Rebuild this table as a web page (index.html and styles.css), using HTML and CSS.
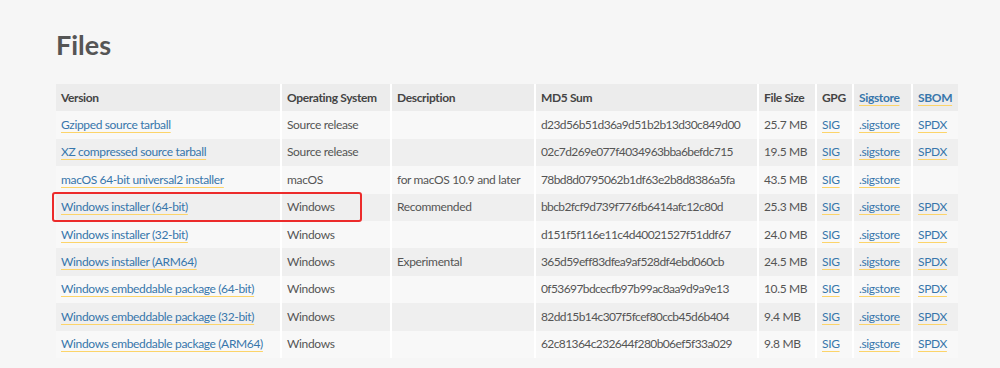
FILE: index.html
```html
<!DOCTYPE html>
<html lang="en">
<head>
  <meta charset="UTF-8" />
  <title>Files</title>
  <link rel="stylesheet" href="styles.css">
</head>
<body>
  <section class="files">
    <h1>Files</h1>
    <div class="table-wrap">
      <table class="file-table">
        <colgroup>
          <col class="c-version">
          <col class="c-os">
          <col class="c-desc">
          <col class="c-md5">
          <col class="c-size">
          <col class="c-gpg">
          <col class="c-sig">
          <col class="c-sbom">
        </colgroup>
        <thead>
          <tr>
            <th>Version</th>
            <th>Operating System</th>
            <th>Description</th>
            <th>MD5 Sum</th>
            <th>File Size</th>
            <th>GPG</th>
            <th><a href="#">Sigstore</a></th>
            <th><a href="#">SBOM</a></th>
          </tr>
        </thead>
        <tbody>
          <tr>
            <td><a href="#">Gzipped source tarball</a></td>
            <td>Source release</td>
            <td></td>
            <td>d23d56b51d36a9d51b2b13d30c849d00</td>
            <td>25.7 MB</td>
            <td><a href="#">SIG</a></td>
            <td><a href="#">.sigstore</a></td>
            <td><a href="#">SPDX</a></td>
          </tr>
          <tr>
            <td><a href="#">XZ compressed source tarball</a></td>
            <td>Source release</td>
            <td></td>
            <td>02c7d269e077f4034963bba6befdc715</td>
            <td>19.5 MB</td>
            <td><a href="#">SIG</a></td>
            <td><a href="#">.sigstore</a></td>
            <td><a href="#">SPDX</a></td>
          </tr>
          <tr>
            <td><a href="#">macOS 64-bit universal2 installer</a></td>
            <td>macOS</td>
            <td>for macOS 10.9 and later</td>
            <td>78bd8d0795062b1df63e2b8d8386a5fa</td>
            <td>43.5 MB</td>
            <td><a href="#">SIG</a></td>
            <td><a href="#">.sigstore</a></td>
            <td></td>
          </tr>
          <tr>
            <td><a href="#">Windows installer (64-bit)</a></td>
            <td>Windows</td>
            <td>Recommended</td>
            <td>bbcb2fcf9d739f776fb6414afc12c80d</td>
            <td>25.3 MB</td>
            <td><a href="#">SIG</a></td>
            <td><a href="#">.sigstore</a></td>
            <td><a href="#">SPDX</a></td>
          </tr>
          <tr>
            <td><a href="#">Windows installer (32-bit)</a></td>
            <td>Windows</td>
            <td></td>
            <td>d151f5f116e11c4d40021527f51ddf67</td>
            <td>24.0 MB</td>
            <td><a href="#">SIG</a></td>
            <td><a href="#">.sigstore</a></td>
            <td><a href="#">SPDX</a></td>
          </tr>
          <tr>
            <td><a href="#">Windows installer (ARM64)</a></td>
            <td>Windows</td>
            <td>Experimental</td>
            <td>365d59eff83dfea9af528df4ebd060cb</td>
            <td>24.5 MB</td>
            <td><a href="#">SIG</a></td>
            <td><a href="#">.sigstore</a></td>
            <td><a href="#">SPDX</a></td>
          </tr>
          <tr>
            <td><a href="#">Windows embeddable package (64-bit)</a></td>
            <td>Windows</td>
            <td></td>
            <td>0f53697bdcecfb97b99ac8aa9d9a9e13</td>
            <td>10.5 MB</td>
            <td><a href="#">SIG</a></td>
            <td><a href="#">.sigstore</a></td>
            <td><a href="#">SPDX</a></td>
          </tr>
          <tr>
            <td><a href="#">Windows embeddable package (32-bit)</a></td>
            <td>Windows</td>
            <td></td>
            <td>82dd15b14c307f5fcef80ccb45d6b404</td>
            <td>9.4 MB</td>
            <td><a href="#">SIG</a></td>
            <td><a href="#">.sigstore</a></td>
            <td><a href="#">SPDX</a></td>
          </tr>
          <tr>
            <td><a href="#">Windows embeddable package (ARM64)</a></td>
            <td>Windows</td>
            <td></td>
            <td>62c81364c232644f280b06ef5f33a029</td>
            <td>9.8 MB</td>
            <td><a href="#">SIG</a></td>
            <td><a href="#">.sigstore</a></td>
            <td><a href="#">SPDX</a></td>
          </tr>
        </tbody>
      </table>
      <div class="highlight"></div>
    </div>
  </section>
</body>
</html>
```

FILE: styles.css
```css
body {
  margin: 0;
  background: #f6f6f6;
  font-family: Lato, "Open Sans", sans-serif;
  color: #555;
}
.files {
  padding: 28px 42px 0 56px;
}
h1 {
  margin: 0 0 22px 0;
  font-size: 27px;
  line-height: 34px;
  font-weight: bold;
  color: #555;
}
.table-wrap {
  position: relative;
  width: 902px;
}
.file-table {
  width: 902px;
  table-layout: fixed;
  border-collapse: separate;
  border-spacing: 0;
  font-size: 12px;
  letter-spacing: -0.35px;
}
.c-version { width: 224px; }
.c-os { width: 110px; }
.c-desc { width: 144px; }
.c-md5 { width: 223px; }
.c-size { width: 58px; }
.c-gpg { width: 37px; }
.c-sig { width: 59px; }
.c-sbom { width: 47px; }
.file-table th,
.file-table td {
  height: 27.4px;
  padding: 0 5px 1px 5px;
  text-align: left;
  white-space: nowrap;
  box-sizing: border-box;
}
.file-table td:nth-child(4) {
  letter-spacing: -0.6px;
}
.file-table th + th,
.file-table td + td {
  border-left: 2px solid #fff;
}
.file-table th {
  background: #ececec;
  color: #444;
  font-weight: bold;
}
.file-table tbody tr:nth-child(odd) td {
  background: #f8f8f8;
}
.file-table tbody tr:nth-child(even) td {
  background: #efefef;
}
.file-table a {
  color: #3776ab;
  text-decoration: underline;
  text-decoration-color: #fcd46a;
  text-decoration-thickness: 1px;
  text-underline-offset: 3px;
  text-decoration-skip-ink: none;
}
.highlight {
  position: absolute;
  left: -4px;
  top: 108px;
  width: 310px;
  height: 30px;
  box-sizing: border-box;
  border: 2px solid #ec2b2b;
  border-radius: 3px;
}
```
